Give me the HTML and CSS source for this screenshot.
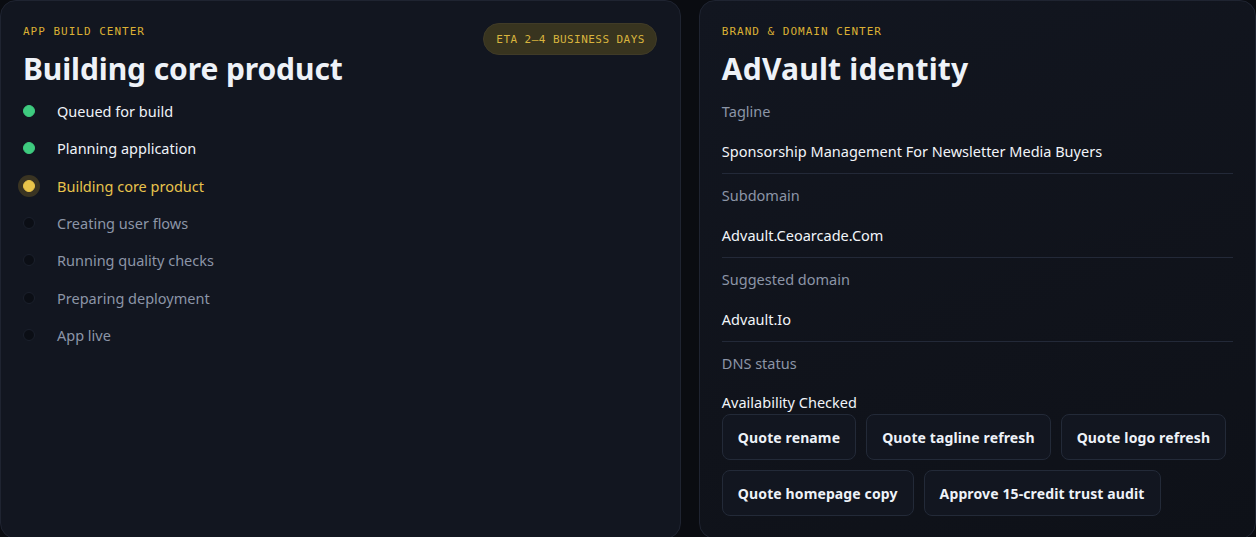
FILE: index.html
```html
<!DOCTYPE html>
<html lang="en">
<head>
<meta charset="utf-8">
<title>Build &amp; Brand</title>
<link rel="stylesheet" href="styles.css">
</head>
<body>
<main class="grid">
  <section class="card build">
    <header class="card-head">
      <div>
        <div class="eyebrow">APP BUILD CENTER</div>
        <h1 class="title">Building core product</h1>
      </div>
      <span class="badge">ETA 2–4 BUSINESS DAYS</span>
    </header>
    <ul class="steps">
      <li class="step done"><span class="dot"></span>Queued for build</li>
      <li class="step done"><span class="dot"></span>Planning application</li>
      <li class="step active"><span class="dot"></span>Building core product</li>
      <li class="step"><span class="dot"></span>Creating user flows</li>
      <li class="step"><span class="dot"></span>Running quality checks</li>
      <li class="step"><span class="dot"></span>Preparing deployment</li>
      <li class="step"><span class="dot"></span>App live</li>
    </ul>
  </section>
  <section class="card brand">
    <header class="card-head">
      <div>
        <div class="eyebrow">BRAND &amp; DOMAIN CENTER</div>
        <h1 class="title">AdVault identity</h1>
      </div>
    </header>
    <dl class="fields">
      <div class="field">
        <dt class="label">Tagline</dt>
        <dd class="value">Sponsorship Management For Newsletter Media Buyers</dd>
      </div>
      <div class="field">
        <dt class="label">Subdomain</dt>
        <dd class="value">Advault.Ceoarcade.Com</dd>
      </div>
      <div class="field">
        <dt class="label">Suggested domain</dt>
        <dd class="value">Advault.Io</dd>
      </div>
      <div class="field last">
        <dt class="label">DNS status</dt>
        <dd class="value">Availability Checked</dd>
      </div>
    </dl>
    <div class="actions">
      <button class="btn">Quote rename</button>
      <button class="btn">Quote tagline refresh</button>
      <button class="btn">Quote logo refresh</button>
      <button class="btn">Quote homepage copy</button>
      <button class="btn">Approve 15-credit trust audit</button>
    </div>
  </section>
</main>
</body>
</html>
```

FILE: styles.css
```css
* { box-sizing: border-box; }

html, body {
  margin: 0;
  padding: 0;
  background: #0a0c11;
  height: 100%;
}

body {
  font-family: "Noto Sans", "DejaVu Sans", sans-serif;
  color: #e8ecf3;
  overflow: hidden;
}

.grid {
  display: grid;
  grid-template-columns: 1.222fr 1fr;
  gap: 18px;
  height: 537px;
}

.card {
  background: #121620;
  border: 1px solid #1f2431;
  border-radius: 16px;
  padding: 22px;
  min-width: 0;
}

.card.brand {
  background: linear-gradient(160deg, #121620 0%, #10131b 60%, #0e1118 100%);
}

.card-head {
  display: flex;
  justify-content: space-between;
  align-items: flex-start;
}

.eyebrow {
  font-family: "DejaVu Sans Mono", "Liberation Mono", monospace;
  font-size: 11px;
  line-height: 16px;
  margin-top: 1px;
  letter-spacing: 1px;
  color: #dbb034;
}

.title {
  margin: 9px 0 0;
  font-size: 30px;
  line-height: 40px;
  font-weight: 700;
  color: #eef2f8;
  letter-spacing: -0.1px;
}

.brand .title {
  letter-spacing: 0.2px;
}

.badge {
  margin-right: 1px;
  height: 32px;
  display: inline-flex;
  align-items: center;
  padding: 0 11px 0 12px;
  border-radius: 16px;
  background: #38341f;
  border: 1px solid #403b27;
  font-family: "DejaVu Sans Mono", "Liberation Mono", monospace;
  font-size: 11px;
  letter-spacing: 0.45px;
  color: #d9b43e;
}

.steps {
  list-style: none;
  margin: 11px 0 0;
  padding: 0;
  display: flex;
  flex-direction: column;
  gap: 15.33px;
}

.step {
  display: flex;
  align-items: center;
  font-size: 14.5px;
  line-height: 22px;
  color: #8c95a7;
}

.step .dot {
  width: 12px;
  height: 12px;
  border-radius: 50%;
  margin-right: 22px;
  background: #0b0e15;
  border: 1px solid #1b202c;
  flex: none;
}

.step.done { color: #eef2f8; }
.step.done .dot {
  background: #3ecb7f;
  border-color: #3ecb7f;
}

.step.active { color: #e8c34c; }
.step.active .dot {
  background: #e9c44a;
  border-color: #e9c44a;
  box-shadow: 0 0 0 5px #3a3422;
}

.fields {
  margin: 11px 0 0;
  padding: 0;
}

.field {
  border-bottom: 1px solid #232938;
  padding-bottom: 11px;
  margin-bottom: 10px;
}

.field.last {
  border-bottom: none;
  padding-bottom: 0;
  margin-bottom: 0;
}

.label {
  font-size: 14.5px;
  line-height: 22px;
  color: #8c95a7;
}

.value {
  margin: 18px 0 0;
  font-size: 14.5px;
  line-height: 22px;
  color: #f1f4f9;
}

.field.last .value {
  margin-top: 18px;
  line-height: 20px;
}

.actions {
  margin-top: 2px;
  display: flex;
  flex-wrap: wrap;
  gap: 10px;
}

.btn {
  height: 46px;
  padding: 0 15px;
  border-radius: 8px;
  border: 1px solid #232a38;
  background: #121620;
  color: #eef2f8;
  font-family: "Noto Sans", "DejaVu Sans", sans-serif;
  font-size: 14px;
  font-weight: 700;
  letter-spacing: 0.12px;
  cursor: pointer;
}
```
